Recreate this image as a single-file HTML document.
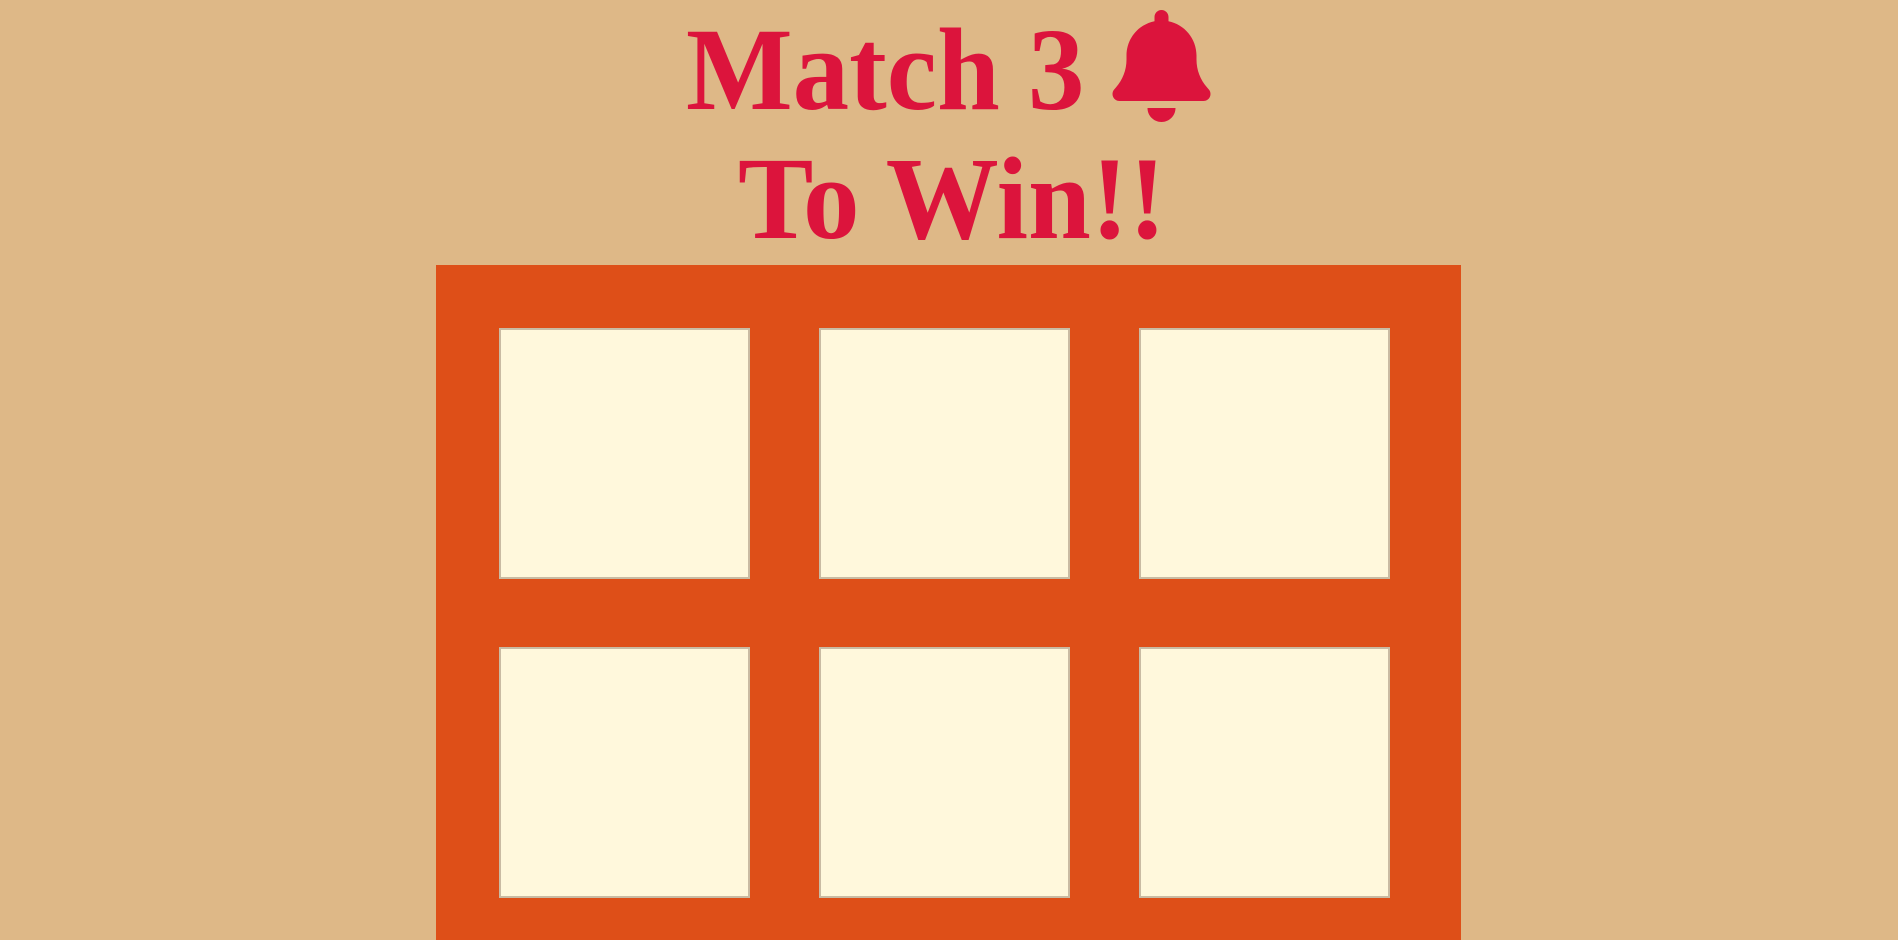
<!DOCTYPE html>
<html><head><meta charset="utf-8"><style>
html,body{margin:0;padding:0;width:1898px;height:940px;overflow:hidden;background:#deb887;}
.t{position:absolute;font-family:"Liberation Serif","Times New Roman",serif;font-weight:bold;font-size:113px;line-height:113px;color:#dc143c;white-space:nowrap;}
.board{position:absolute;left:436px;top:265px;width:1025px;height:675px;background:#de4f18;}
.c{position:absolute;width:247px;height:247px;background:#fff8dc;border:2px solid #c9bba3;}
</style></head><body>
<div class="t" style="left:686px;top:16px;transform:scaleY(1.04);transform-origin:0 100%;">Match 3</div>
<svg style="position:absolute;left:1112px;top:10px" width="99" height="112" viewBox="0 0 448 512"><path fill="#dc143c" d="M224 0c-17.7 0-32 14.300-32 32V51.2C119 66 64 130.6 64 208v18.8c0 47-17.3 92.4-48.5 127.6l-7.4 8.300c-8.400 9.400-10.400 22.900-5.300 34.400S19.400 416 32 416H416c12.600 0 24-7.400 29.200-18.900s3.100-25-5.300-34.400l-7.400-8.300C401.300 319.200 384 273.900 384 226.800V208c0-77.400-55-142-128-156.800V32c0-17.700-14.300-32-32-32zm45.300 493.300c12-12 18.700-28.300 18.700-45.300H224 160c0 17 6.700 33.300 18.700 45.300s28.300 18.700 45.300 18.700s33.300-6.700 45.300-18.700z"/></svg>
<div class="t" style="left:738px;top:145px;transform:scaleY(1.04);transform-origin:0 100%;">To Win!!</div>
<div class="board">
<div class="c" style="left:63px;top:63px"></div>
<div class="c" style="left:383px;top:63px"></div>
<div class="c" style="left:703px;top:63px"></div>
<div class="c" style="left:63px;top:382px"></div>
<div class="c" style="left:383px;top:382px"></div>
<div class="c" style="left:703px;top:382px"></div>
</div>
</body></html>
